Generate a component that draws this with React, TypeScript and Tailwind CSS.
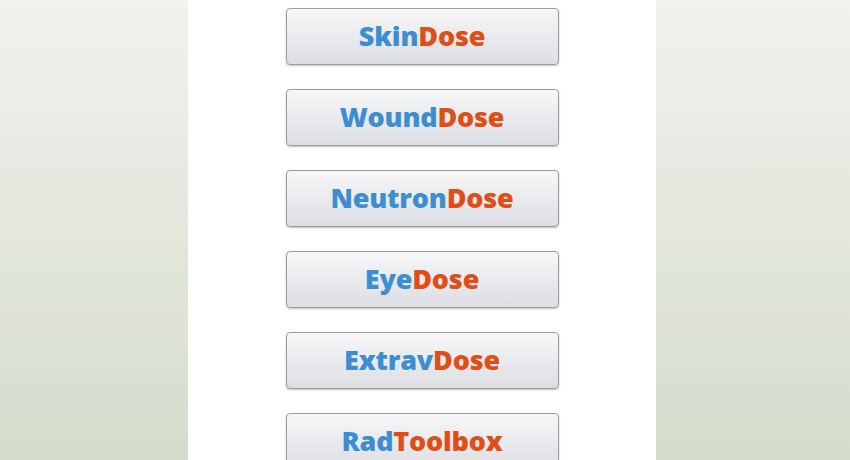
const apps = [
  ["Skin", "Dose"],
  ["Wound", "Dose"],
  ["Neutron", "Dose"],
  ["Eye", "Dose"],
  ["Extrav", "Dose"],
  ["Rad", "Toolbox"],
];

export default function App() {
  return (
    <main className="flex h-[460px] w-[850px] justify-center overflow-hidden bg-gradient-to-b from-[#f1f2ee] to-[#d5dccb] pr-[6px]">
      <div className="flex w-[468px] flex-col items-center gap-[24px] bg-white pt-[8px]">
        {apps.map(([first, second]) => (
          <button
            key={first}
            className="flex h-[57px] w-[273px] shrink-0 items-center justify-center rounded-[4px] border border-[#9a9c9f] bg-gradient-to-b from-[#f7f7f8] to-[#dcdee3] pb-[3px] shadow-[0_1px_2px_rgba(0,0,0,0.25)]"
          >
            <span className="font-['Open_Sans',sans-serif] text-[27px] font-extrabold tracking-[-0.2px] leading-none">
              <span className="text-[#3d8ed0]">{first}</span>
              <span className="text-[#e04e17]">{second}</span>
            </span>
          </button>
        ))}
      </div>
    </main>
  );
}
